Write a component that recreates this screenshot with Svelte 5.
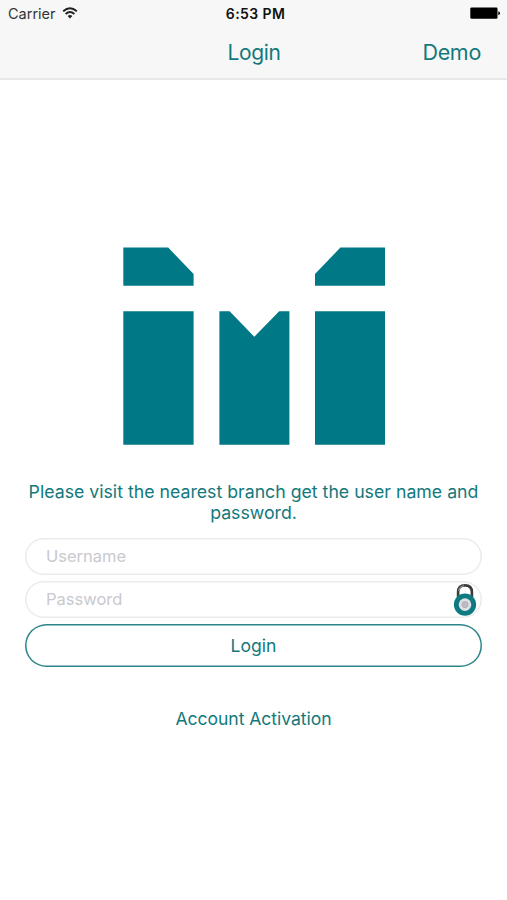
<script lang="ts">
  let username = '';
  let password = '';
</script>

<div class="screen">
  <header>
    <div class="status">
      <div class="carrier">
        <span>Carrier</span>
        <svg class="wifi" viewBox="0 0 16 12" width="16" height="12">
          <path d="M1.2 4.3 Q8 -1.6 14.8 4.3" />
          <path d="M3.6 7 Q8 3.2 12.4 7" />
          <path class="dot" d="M5.6 8.9 Q8 7 10.4 8.9 L8 11.4 Z" />
        </svg>
      </div>
      <span class="time">6:53 PM</span>
      <svg class="battery" viewBox="0 0 30 12" width="30" height="12">
        <rect x="0.3" y="0.5" width="27.2" height="11.3" rx="1.2" />
        <path d="M28.3 4.2 Q30 4.8 30 6.2 Q30 7.6 28.3 8.2 Z" />
      </svg>
    </div>
    <nav>
      <h1>Login</h1>
      <a href="#demo">Demo</a>
    </nav>
  </header>

  <main>
    <svg class="logo" viewBox="0 0 262 198" width="262" height="198">
      <path d="M0.3 0.6 H45.2 L70.6 27 V38.8 H0.3 Z" />
      <path d="M262 0.6 H217.4 L192 27 V38.8 H262 Z" />
      <path d="M0.3 64.2 H70.6 V197.8 H0.3 Z" />
      <path d="M96.4 64.2 H106.6 L131.3 89.7 L156.2 64.2 H166.4 V197.8 H96.4 Z" />
      <path d="M192 64.2 H262 V197.8 H192 Z" />
    </svg>

    <p>Please visit the nearest branch get the user name and password.</p>

    <form on:submit|preventDefault>
      <div class="field">
        <input type="text" placeholder="Username" bind:value={username} />
      </div>
      <div class="field">
        <input type="password" placeholder="Password" bind:value={password} />
        <svg class="lock" viewBox="0 0 24 33" width="24" height="33">
          <path class="shackle" d="M5.1 15 V9.2 Q5.1 2.4 12 2.4 Q18.9 2.4 18.9 9.2 V15" />
          <path class="shine" d="M5.5 8 Q6.8 3.3 11 2.6" />
          <circle class="body" cx="12" cy="21.6" r="11.1" />
          <circle class="dial" cx="12" cy="21.6" r="6.3" />
          <circle class="knob" cx="12" cy="21.6" r="3.1" />
        </svg>
      </div>
      <button type="submit">Login</button>
    </form>

    <a class="activation" href="#activation">Account Activation</a>
  </main>
</div>

<style>
  :global(body) {
    background: #fff;
  }
  .screen {
    display: flex;
    flex-direction: column;
    height: 900px;
    color: #13797c;
    font-family: Inter, 'Liberation Sans', sans-serif;
  }
  header {
    box-sizing: border-box;
    height: 80px;
    background: #f7f7f7;
    border-bottom: 2px solid #e8e8e8;
  }
  .status {
    display: grid;
    grid-template-columns: 1fr auto 1fr;
    align-items: center;
    height: 27px;
    padding: 0 7px 0 8px;
    color: #111;
    font-size: 14.5px;
  }
  .carrier {
    display: flex;
    align-items: center;
    gap: 6px;
    color: #333;
  }
  .time {
    padding-left: 3px;
    font-size: 14px;
    font-weight: 600;
    letter-spacing: 0.4px;
  }
  .wifi {
    margin-top: -2px;
  }
  .wifi path {
    fill: none;
    stroke: #222;
    stroke-width: 1.9;
  }
  .wifi .dot {
    fill: #222;
    stroke: none;
  }
  .battery {
    justify-self: end;
    margin-top: -1px;
    fill: #000;
  }
  nav {
    display: grid;
    grid-template-columns: 1fr auto 1fr;
    align-items: center;
    height: 51px;
    padding: 0 26px;
  }
  h1 {
    grid-column: 2;
    margin: 0;
    padding-left: 1px;
    font-size: 21px;
    font-weight: 400;
    letter-spacing: -0.4px;
  }
  a {
    color: inherit;
    text-decoration: none;
  }
  nav a {
    justify-self: end;
    padding-bottom: 2px;
    font-size: 21.5px;
    letter-spacing: -0.3px;
  }
  main {
    display: flex;
    flex-direction: column;
    align-items: center;
    padding: 167px 25px 0;
  }
  .logo {
    fill: #007886;
  }
  p {
    width: 460px;
    margin: 36px 0 15px;
    font-size: 17.72px;
    line-height: 21px;
    text-align: center;
  }
  form {
    display: flex;
    flex-direction: column;
    gap: 6px;
    width: 100%;
  }
  .field {
    position: relative;
    height: 37px;
  }
  input {
    box-sizing: border-box;
    width: 100%;
    height: 37px;
    padding: 0 21px 2px;
    border: none;
    border-radius: 19px;
    box-shadow: inset 0 0 0 1.5px #ebebec;
    background: none;
    color: inherit;
    font-family: inherit;
    font-size: 16.5px;
    outline: none;
  }
  input::placeholder {
    color: #c9c9ce;
    opacity: 1;
  }
  .lock {
    position: absolute;
    top: 2px;
    right: 5px;
  }
  .shackle {
    fill: none;
    stroke: #3b3b3d;
    stroke-width: 2.6;
  }
  .shine {
    fill: none;
    stroke: #8e8e90;
    stroke-width: 1.2;
  }
  .body {
    fill: #0d7b80;
  }
  .dial {
    fill: #dfdfe6;
  }
  .knob {
    fill: #bdbcc0;
    stroke: #aaaab0;
    stroke-width: 0.8;
  }
  button {
    height: 43px;
    padding: 0;
    border: none;
    border-radius: 22px;
    box-shadow: inset 0 0 0 1.5px #2b8588;
    background: none;
    color: inherit;
    font-family: inherit;
    font-size: 17.6px;
    font-weight: 400;
  }
  .activation {
    margin-top: 41px;
    font-size: 17.6px;
    line-height: 22px;
    letter-spacing: -0.05px;
  }
</style>
